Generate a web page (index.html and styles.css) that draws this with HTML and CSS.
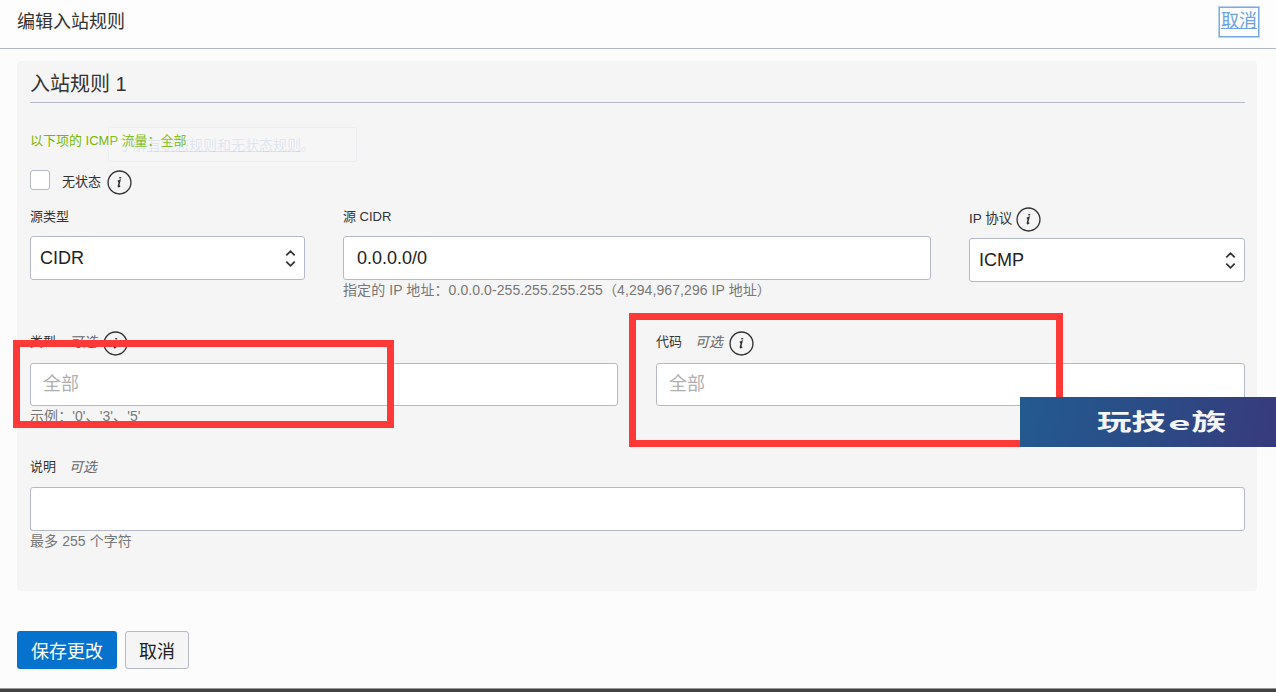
FILE: index.html
```html
<!DOCTYPE html>
<html lang="zh-CN">
<head>
<meta charset="utf-8">
<title>编辑入站规则</title>
<link rel="stylesheet" href="styles.css">
</head>
<body>
<header class="top">
  <h1 class="top-title">编辑入站规则</h1>
  <a class="top-cancel" href="#">取消</a>
</header>
<main class="panel">
  <h2 class="panel-title">入站规则 1</h2>
  <p class="notice">以下项的 ICMP 流量：全部</p>
  <div class="check-row">
    <span class="check"></span>
    <span class="check-label">无状态</span>
    <svg class="info" viewBox="0 0 24 24"><circle cx="12" cy="12" r="11"/><path class="info-i" d="M10.4 11l1.9-.9-1.3 5.2c-.2.9.5 1 1.6-.2"/><path class="info-dot" d="M12.7 6.8v1.3"/></svg>
  </div>
  <div class="row row-source">
    <div class="field f-type">
      <label class="lab">源类型</label>
      <div class="sel-wrap">
        <select class="ctl sel"><option>CIDR</option></select>
        <svg class="chev" viewBox="0 0 12 20"><path d="M2 7l4-4 4 4M2 13l4 4 4-4"/></svg>
      </div>
    </div>
    <div class="field f-cidr">
      <label class="lab">源 CIDR</label>
      <input class="ctl ctl-text" value="0.0.0.0/0">
      <p class="help">指定的 IP 地址：0.0.0.0-255.255.255.255（4,294,967,296 IP 地址）</p>
    </div>
    <div class="field f-proto">
      <label class="lab lab-icon">IP 协议
        <svg class="info" viewBox="0 0 24 24"><circle cx="12" cy="12" r="11"/><path class="info-i" d="M10.4 11l1.9-.9-1.3 5.2c-.2.9.5 1 1.6-.2"/><path class="info-dot" d="M12.7 6.8v1.3"/></svg>
      </label>
      <div class="sel-wrap">
        <select class="ctl sel"><option>ICMP</option></select>
        <svg class="chev" viewBox="0 0 12 20"><path d="M2 7l4-4 4 4M2 13l4 4 4-4"/></svg>
      </div>
    </div>
  </div>
  <div class="row row-code">
    <div class="field f-half">
      <label class="lab lab-opt">类型 <em class="opt">可选</em>
        <svg class="info" viewBox="0 0 24 24"><circle cx="12" cy="12" r="11"/><path class="info-i" d="M10.4 11l1.9-.9-1.3 5.2c-.2.9.5 1 1.6-.2"/><path class="info-dot" d="M12.7 6.8v1.3"/></svg>
      </label>
      <input class="ctl ctl-short" placeholder="全部">
      <p class="help">示例：'0'、'3'、'5'</p>
    </div>
    <div class="field f-half-end">
      <label class="lab lab-opt">代码 <em class="opt">可选</em>
        <svg class="info" viewBox="0 0 24 24"><circle cx="12" cy="12" r="11"/><path class="info-i" d="M10.4 11l1.9-.9-1.3 5.2c-.2.9.5 1 1.6-.2"/><path class="info-dot" d="M12.7 6.8v1.3"/></svg>
      </label>
      <input class="ctl ctl-short" placeholder="全部">
    </div>
  </div>
  <div class="field f-desc">
    <label class="lab">说明 <em class="opt">可选</em></label>
    <input class="ctl">
    <p class="help">最多 255 个字符</p>
  </div>
</main>
<footer class="actions">
  <button class="btn btn-primary">保存更改</button>
  <button class="btn btn-plain">取消</button>
</footer>
<div class="bottom-strip"></div>

<div class="ghost">了解<span class="ghost-link">有状态规则和无状态规则</span>。</div>
<div class="mark mark-a"></div>
<div class="mark mark-b"></div>
<div class="brand"><span class="brand-text">玩技<span class="brand-e"><span class="brand-e-in">e</span></span>族</span></div>
</body>
</html>
```

FILE: styles.css
```css
* { box-sizing: border-box; }
html, body { margin: 0; height: 100%; }
body {
  width: 1276px;
  height: 692px;
  overflow: hidden;
  position: relative;
  background: #fcfcfc;
  color: #222;
  font-family: "Liberation Sans", "Noto Sans CJK SC", sans-serif;
  font-size: 12px;
}
.top {
  height: 49px;
  border-bottom: 1px solid #b4bac8;
  padding: 0 16px 0 17px;
  display: flex;
  justify-content: space-between;
  background: #fdfdfd;
}
.top-title {
  margin: 0;
  font-size: 18px;
  font-weight: 400;
  line-height: 44px;
  color: #333;
}
.top-cancel {
  margin-top: 6px;
  height: 32px;
  width: 42px;
  border: 2px solid #79ace6;
  outline: 1px solid #b5d0f0;
  outline-offset: -1px;
  font-size: 18px;
  line-height: 26px;
  text-align: center;
  color: #6ea3e2;
  text-decoration: underline;
}
.panel {
  margin: 12px 19px 0 17px;
  height: 530px;
  padding: 0 12px 0 13px;
  background: #f5f5f5;
  border-radius: 4px;
}
.panel-title {
  margin: 0;
  height: 42px;
  border-bottom: 1px solid #b4bac8;
  font-size: 20px;
  font-weight: 400;
  line-height: 46px;
  color: #333;
}
.notice {
  margin: 28px 0 0;
  height: 20px;
  font-size: 13px;
  line-height: 20px;
  color: #76b900;
}
.check-row {
  margin-top: 19px;
  height: 25px;
  display: flex;
  align-items: center;
}
.check {
  align-self: flex-start;
  width: 20px;
  height: 20px;
  background: #fff;
  border: 1px solid #b4bac8;
  border-radius: 3px;
}
.check-label {
  margin-left: 12px;
  margin-right: 6px;
  margin-bottom: 5px;
  font-size: 13px;
  color: #333;
}
.info {
  width: 25px;
  height: 25px;
  flex: none;
  fill: none;
  stroke: #333;
  stroke-width: 1.3;
}
.info-i { stroke-width: 1.5; }
.info-dot { stroke-width: 1.9; }
.row { display: flex; }
.row-source { margin-top: 12px; gap: 38px; }
.row-code { margin-top: 31px; gap: 38px; }
.field { min-width: 0; }
.f-type { width: 275px; }
.f-cidr { width: 588px; }
.f-proto { width: 276px; }
.f-half { width: 588px; flex: none; }
.f-half-end { flex: 1; }
.f-desc { margin-top: 31px; }
.lab {
  display: flex;
  align-items: flex-start;
  gap: 13px;
  height: 20px;
  margin-bottom: 9px;
  color: #333;
  font-size: 13px;
  line-height: 20px;
}
.lab-icon { height: 25px; margin-bottom: 6px; gap: 4px; font-size: 13.5px; line-height: 24px; }
.lab-opt { height: 25px; margin-bottom: 7px; line-height: 22px; }
.f-desc .lab { margin-bottom: 10px; }
.opt {
  font-style: italic;
  color: #666;
  font-size: 14px;
}
.lab-opt .info { margin-left: -7px; }
.ctl {
  display: block;
  width: 100%;
  height: 44px;
  padding: 0 9px;
  background: #fff;
  border: 1px solid #b4bac8;
  border-radius: 3px;
  font-family: inherit;
  font-size: 18px;
  color: #222;
}
.ctl-text { padding: 0 13px; }
.ctl-short { height: 43px; padding: 0 12px; }
.ctl::placeholder { color: #b0b0b0; opacity: 1; font-size: 18px; }
.sel-wrap { position: relative; }
.sel { appearance: none; }
.chev {
  position: absolute;
  right: 8px;
  top: 12px;
  width: 13px;
  height: 21px;
  fill: none;
  stroke: #333;
  stroke-width: 1.7;
}
.help {
  margin: 0;
  height: 20px;
  line-height: 20px;
  color: #777;
  font-size: 14px;
  letter-spacing: .08px;
  white-space: nowrap;
}
.actions {
  margin: 40px 0 0 17px;
  display: flex;
  gap: 8px;
}
.btn {
  height: 38px;
  border-radius: 3px;
  font-family: inherit;
  font-size: 18px;
  padding: 0;
}
.btn-primary {
  width: 100px;
  background: #0572ce;
  color: #fff;
  border: 0;
}
.btn-plain {
  width: 64px;
  background: #f5f5f5;
  color: #222;
  border: 1px solid #b4bac8;
}
.bottom-strip {
  position: absolute;
  left: 0;
  right: 0;
  bottom: 0;
  height: 4px;
  background: #444;
  border-top: 1px solid #999;
}
.ghost {
  position: absolute;
  left: 108px;
  top: 127px;
  width: 249px;
  height: 35px;
  padding: 7px 10px;
  border: 1px solid rgba(200,210,225,.22);
  border-radius: 3px;
  background: rgba(255,255,255,.12);
  color: rgba(120,160,215,.2);
  font-size: 14px;
  line-height: 20px;
  white-space: nowrap;
  pointer-events: none;
}
.ghost-link { text-decoration: underline; }
.mark {
  position: absolute;
  border: 7px solid #ff3838;
  pointer-events: none;
}
.mark-a { left: 13px; top: 340px; width: 381px; height: 88px; }
.mark-b { left: 629px; top: 313px; width: 434px; height: 134px; }
.brand {
  position: absolute;
  left: 1020px;
  top: 397px;
  width: 256px;
  height: 50px;
  padding-left: 77px;
  background: linear-gradient(100deg, #235a90, #2c4a85 55%, #383a7c);
  overflow: hidden;
}
.brand-text {
  display: inline-block;
  transform: scaleX(1.5);
  transform-origin: left center;
  color: #f4f6fa;
  font-family: "Noto Sans CJK SC", sans-serif;
  font-weight: 700;
  font-size: 23px;
  line-height: 46px;
  white-space: nowrap;
}
.brand-e {
  display: inline-block;
  width: 17px;
  text-align: center;
  font-size: 17px;
}
.brand-e-in {
  display: inline-block;
  transform: scaleX(1.5);
}
```
